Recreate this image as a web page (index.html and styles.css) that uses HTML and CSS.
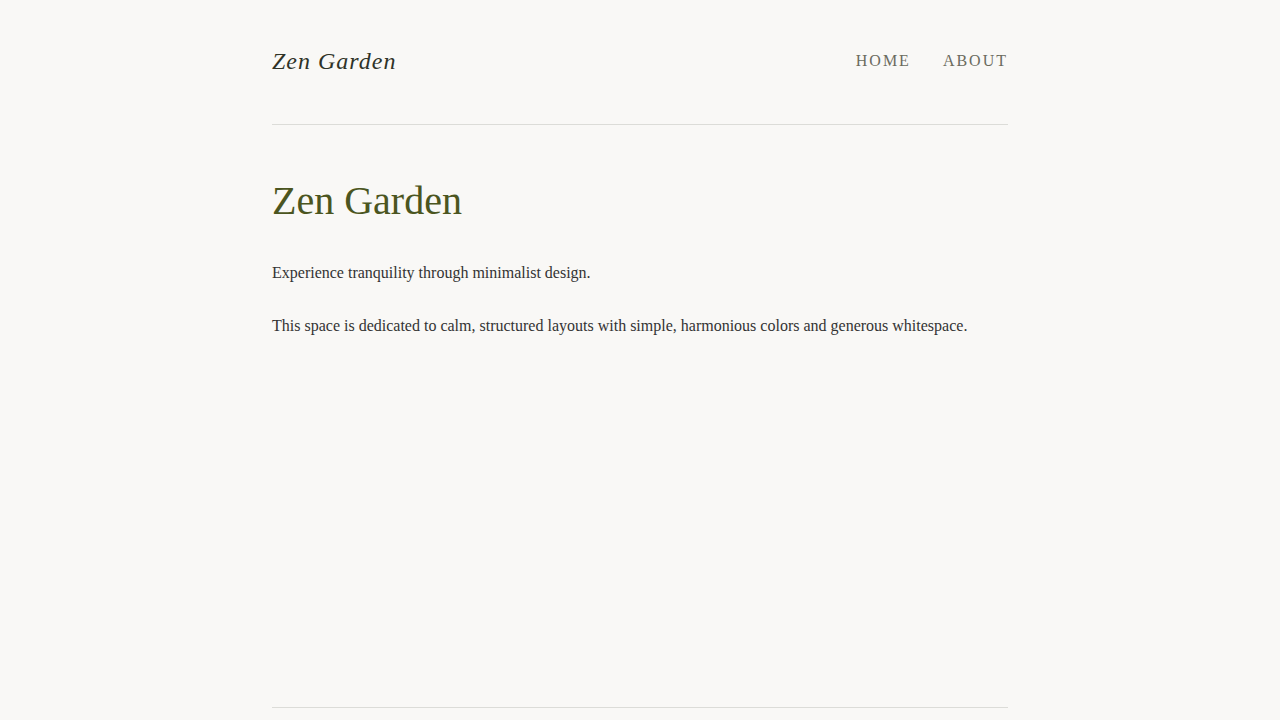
FILE: index.html
```html
<!DOCTYPE html>
<html lang="en">
<head>
<meta charset="utf-8">
<title>Zen Garden</title>
<link rel="stylesheet" href="styles.css">
</head>
<body>
<div class="page">
  <header class="site-header">
    <div class="logo">Zen Garden</div>
    <nav class="nav">
      <a href="#" class="nav-link">Home</a>
      <a href="#" class="nav-link">About</a>
    </nav>
  </header>
  <main class="content">
    <h1 class="title">Zen Garden</h1>
    <p class="text">Experience tranquility through minimalist design.</p>
    <p class="text">This space is dedicated to calm, structured layouts with simple, harmonious colors and generous whitespace.</p>
  </main>
  <footer class="site-footer"></footer>
</div>
</body>
</html>
```

FILE: styles.css
```css
* { box-sizing: border-box; }
html, body {
  margin: 0;
  padding: 0;
  background: #f9f8f6;
}
body {
  font-family: "Liberation Serif", "Times New Roman", serif;
  color: #333333;
}
.page {
  max-width: 736px;
  margin: 0 auto;
}
.site-header {
  display: flex;
  justify-content: space-between;
  align-items: center;
  height: 125px;
  padding-bottom: 2px;
  border-bottom: 1px solid #dcdcd8;
}
.logo {
  font-size: 24px;
  font-style: italic;
  letter-spacing: 1px;
  color: #2f3328;
}
.nav {
  display: flex;
  gap: 32px;
}
.nav-link {
  font-size: 16px;
  text-transform: uppercase;
  letter-spacing: 2px;
  color: #6b6b5e;
  text-decoration: none;
}
.content {
  min-height: 582px;
  padding-top: 53px;
}
.title {
  margin: 0 0 35px;
  font-size: 40px;
  font-weight: normal;
  line-height: 46px;
  color: #4b5520;
}
.text {
  margin: 0 0 24px;
  font-size: 16px;
  line-height: 1.8;
}
.site-footer {
  border-top: 1px solid #dcdcd8;
  height: 40px;
}
```
